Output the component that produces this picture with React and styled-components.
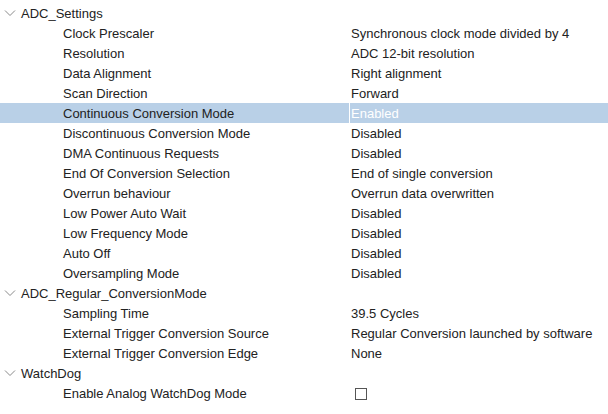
import styled, { createGlobalStyle } from "styled-components";

const GlobalStyle = createGlobalStyle`
  body {
    margin: 0;
    background: #ffffff;
    font-family: "Liberation Sans", Arial, sans-serif;
    font-size: 13px;
    color: #222;
  }
`;

const Tree = styled.div`
  width: 608px;
  height: 414px;
  padding-top: 3px;
  box-sizing: border-box;
  background: #fff;
`;

const Row = styled.div`
  display: grid;
  grid-template-columns: 349px 1fr;
  height: 20px;
  align-items: center;
  background: ${(p) => (p.selected ? "#b9d0e7" : "transparent")};
`;

const GroupLabel = styled.div`
  display: flex;
  align-items: center;
  gap: 5px;
  padding-left: 4px;
  white-space: nowrap;
`;

const Label = styled.div`
  padding-left: 63px;
  padding-top: 1px;
  white-space: nowrap;
`;

const Value = styled.div`
  height: 100%;
  display: flex;
  align-items: center;
  padding-left: 1px;
  padding-top: 1px;
  box-sizing: border-box;
  white-space: nowrap;
  color: ${(p) => (p.selected ? "#ffffff" : "#222")};
  border-left: 1px solid ${(p) => (p.selected ? "#ffffff" : "transparent")};
`;

const Checkbox = styled.span`
  display: inline-block;
  width: 10px;
  height: 10px;
  margin-left: 4px;
  border: 1.5px solid #555;
`;

const Chevron = () => (
  <svg width="12" height="8" viewBox="0 0 12 8">
    <path d="M1 1.5 L6 6.5 L11 1.5" fill="none" stroke="#8a8a8a" strokeWidth="1" />
  </svg>
);

const groups = [
  {
    name: "ADC_Settings",
    items: [
      ["Clock Prescaler", "Synchronous clock mode divided by 4"],
      ["Resolution", "ADC 12-bit resolution"],
      ["Data Alignment", "Right alignment"],
      ["Scan Direction", "Forward"],
      ["Continuous Conversion Mode", "Enabled", true],
      ["Discontinuous Conversion Mode", "Disabled"],
      ["DMA Continuous Requests", "Disabled"],
      ["End Of Conversion Selection", "End of single conversion"],
      ["Overrun behaviour", "Overrun data overwritten"],
      ["Low Power Auto Wait", "Disabled"],
      ["Low Frequency Mode", "Disabled"],
      ["Auto Off", "Disabled"],
      ["Oversampling Mode", "Disabled"],
    ],
  },
  {
    name: "ADC_Regular_ConversionMode",
    items: [
      ["Sampling Time", "39.5 Cycles"],
      ["External Trigger Conversion Source", "Regular Conversion launched by software"],
      ["External Trigger Conversion Edge", "None"],
    ],
  },
  {
    name: "WatchDog",
    items: [["Enable Analog WatchDog Mode", null]],
  },
];

export default function App() {
  return (
    <>
      <GlobalStyle />
      <Tree>
        {groups.map((g) => (
          <div key={g.name}>
            <Row>
              <GroupLabel>
                <Chevron />
                {g.name}
              </GroupLabel>
            </Row>
            {g.items.map(([label, value, selected]) => (
              <Row key={label} selected={selected}>
                <Label>{label}</Label>
                <Value selected={selected}>
                  {value === null ? <Checkbox /> : value}
                </Value>
              </Row>
            ))}
          </div>
        ))}
      </Tree>
    </>
  );
}
